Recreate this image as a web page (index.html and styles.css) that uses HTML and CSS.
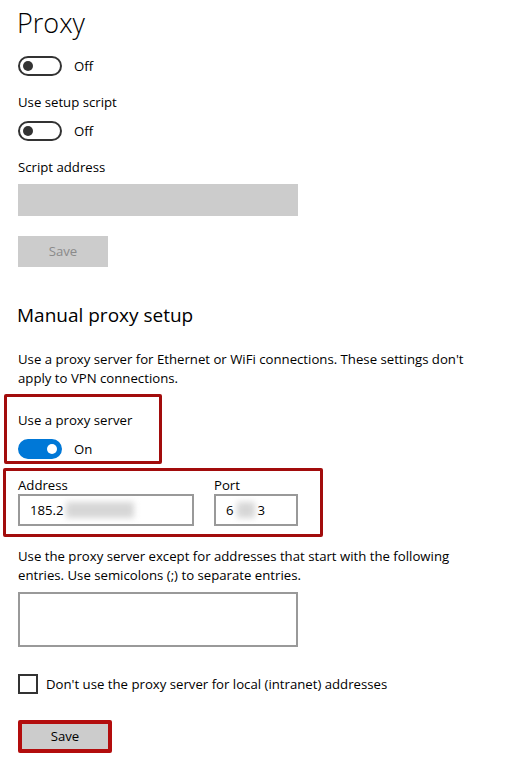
FILE: index.html
```html
<!DOCTYPE html>
<html lang="en">
<head>
<meta charset="utf-8">
<title>Proxy</title>
<link rel="stylesheet" href="styles.css">
</head>
<body>
<div class="page">
  <h1 class="title">Proxy</h1>
  <div class="toggle-row mt-13">
    <span class="toggle"><span class="knob"></span></span>
    <span class="toggle-text">Off</span>
  </div>
  <div class="label mt-16">Use setup script</div>
  <div class="toggle-row mt-9">
    <span class="toggle"><span class="knob"></span></span>
    <span class="toggle-text">Off</span>
  </div>
  <div class="label mt-16">Script address</div>
  <div class="input-disabled"></div>
  <div class="btn-disabled">Save</div>

  <h2 class="subtitle">Manual proxy setup</h2>
  <p class="desc desc-first">Use a proxy server for Ethernet or WiFi connections. These settings don't apply to VPN connections.</p>

  <div class="mark mark-toggle">
    <div class="label">Use a proxy server</div>
    <div class="toggle-row mt-9">
      <span class="toggle on"><span class="knob"></span></span>
      <span class="toggle-text">On</span>
    </div>
  </div>

  <div class="mark mark-fields">
    <div class="field">
      <div class="field-label">Address</div>
      <div class="text-input addr"><span>185.2</span><span class="blur blur-addr"></span></div>
    </div>
    <div class="field">
      <div class="field-label">Port</div>
      <div class="text-input port"><span>6</span><span class="blur blur-port"></span><span>3</span></div>
    </div>
  </div>

  <p class="desc desc-second">Use the proxy server except for addresses that start with the following entries. Use semicolons (;) to separate entries.</p>
  <div class="textarea"></div>

  <div class="check-row">
    <span class="checkbox"></span>
    <span class="check-text">Don't use the proxy server for local (intranet) addresses</span>
  </div>

  <div class="btn-save">Save</div>
</div>
</body>
</html>
```

FILE: styles.css
```css
html, body {
  margin: 0;
  padding: 0;
  background: #ffffff;
}
body {
  font-family: "Open Sans", "Noto Sans", "Liberation Sans", sans-serif;
  color: #000000;
  font-size: 13.2px;
}
.page {
  padding: 0 18px;
  display: flex;
  flex-direction: column;
  align-items: flex-start;
}
.title {
  margin: 3px 0 0 -1px;
  font-size: 27px;
  font-weight: 300;
  line-height: 40px;
  height: 40px;
  color: #000;
}
.mt-13 { margin-top: 13px; }
.mt-16 { margin-top: 16px; }
.mt-9 { margin-top: 9px; }

.label {
  line-height: 20px;
  height: 20px;
  color: #000;
}
.toggle-row {
  display: flex;
  align-items: center;
  height: 20px;
}
.toggle {
  box-sizing: border-box;
  width: 44px;
  height: 20px;
  border: 2px solid #333333;
  border-radius: 10px;
  display: flex;
  align-items: center;
  padding-left: 3px;
}
.knob {
  width: 10px;
  height: 10px;
  border-radius: 50%;
  background: #333333;
}
.toggle.on {
  background: #0078d7;
  border-color: #0078d7;
  justify-content: flex-end;
  padding: 0 3px 0 0;
}
.toggle.on .knob {
  background: #ffffff;
}
.toggle-text {
  margin-left: 12px;
  line-height: 20px;
}
.input-disabled {
  margin-top: 7px;
  width: 280px;
  height: 32px;
  background: #cccccc;
}
.btn-disabled {
  margin-top: 20px;
  width: 90px;
  height: 31px;
  background: #cccccc;
  color: #8a8a8a;
  line-height: 31px;
  text-align: center;
}
.subtitle {
  margin: 34px 0 0 -1px;
  font-size: 19px;
  font-weight: 400;
  line-height: 28px;
  height: 28px;
}
.desc {
  margin: 0;
  line-height: 19px;
  width: 470px;
}
.desc-first { margin-top: 21px; }
.desc-second { margin-top: 10px; }

.mark {
  box-sizing: border-box;
  border: 3px solid #a20c0c;
  border-radius: 2px;
}
.mark-toggle {
  margin-top: 6px;
  margin-left: -14px;
  width: 158px;
  height: 70px;
  padding: 13px 0 0 11px;
}
.mark-fields {
  margin-top: 4px;
  margin-left: -15px;
  width: 320px;
  height: 69px;
  padding: 5px 0 0 12px;
  display: flex;
  gap: 20px;
}
.field-label {
  line-height: 18px;
  height: 18px;
}
.text-input {
  box-sizing: border-box;
  height: 32px;
  border: 2px solid #999999;
  display: flex;
  align-items: center;
  padding-left: 10px;
  color: #000;
}
.text-input.addr { width: 176px; }
.text-input.port { width: 84px; }
.blur {
  display: inline-block;
  height: 16px;
  background: #d6d6d6;
  filter: blur(3px);
}
.blur-addr { width: 68px; margin-left: 2px; }
.blur-port { width: 18px; margin: 0 3px; }

.textarea {
  box-sizing: border-box;
  margin-top: 7px;
  width: 280px;
  height: 55px;
  border: 2px solid #999999;
}
.check-row {
  margin-top: 27px;
  display: flex;
  align-items: center;
  height: 20px;
}
.checkbox {
  box-sizing: border-box;
  width: 20px;
  height: 20px;
  border: 2px solid #333333;
}
.check-text {
  margin-left: 8px;
  line-height: 20px;
}
.btn-save {
  box-sizing: border-box;
  margin-top: 26px;
  width: 94px;
  height: 33px;
  border: 4px solid #b30d0d;
  border-radius: 2px;
  background: #cccccc;
  color: #000;
  line-height: 25px;
  text-align: center;
}
```
